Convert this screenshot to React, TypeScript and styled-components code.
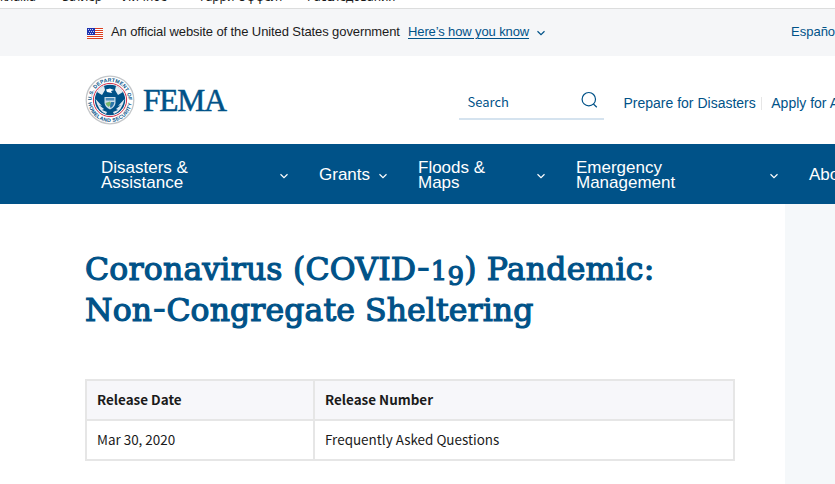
import React from "react";
import styled, { createGlobalStyle } from "styled-components";

const GlobalStyle = createGlobalStyle`
  * {
    box-sizing: border-box;
  }

  body {
    margin: 0;
    background: #fff;
    color: #1b1b1b;
    font-family: "Liberation Sans", Arial, sans-serif;
    overflow: hidden;
  }
`;

const Page = styled.div`
  width: 835px;
  height: 484px;
  display: flex;
  flex-direction: column;
  overflow: hidden;
`;

const BookmarksBar = styled.div`
  height: 9px;
  flex: none;
  display: flex;
  align-items: flex-end;
  border-bottom: 1px solid #dcdddd;
  overflow: hidden;
`;

const Bookmark = styled.span<{ width: number }>`
  width: ${(props) => props.width}px;
  flex: none;
  font-family: "Noto Sans", sans-serif;
  font-size: 12px;
  line-height: 14px;
  margin-bottom: 4px;
  white-space: nowrap;
`;

const Banner = styled.div`
  height: 47px;
  flex: none;
  display: flex;
  align-items: center;
  padding-left: 87px;
  background: #f5f6f8;
  font-size: 13px;
  line-height: 15px;
  white-space: nowrap;
  color: #005288;

  svg {
    margin-top: 1px;
  }
`;

const BannerText = styled.span`
  width: 297px;
  margin: 0 0 2px 8px;
  color: #1b1b1b;
  letter-spacing: -0.1px;
`;

const BannerLink = styled.a`
  text-decoration: underline;
  text-underline-offset: 2px;
  letter-spacing: -0.12px;
  margin: 0 7px 2px 0;
`;

const Language = styled.a`
  margin: 0 0 2px auto;
  width: 44px;
`;

const Header = styled.header`
  height: 88px;
  flex: none;
  display: flex;
  align-items: center;
  padding-left: 85px;
  color: #005288;
  white-space: nowrap;
`;

const Brand = styled.div`
  display: flex;
  align-items: center;
  width: 374px;
  flex: none;
`;

const Wordmark = styled.span`
  margin-left: 8px;
  padding-top: 1px;
  font-family: "Liberation Serif", serif;
  font-size: 31.5px;
  line-height: 36px;
  letter-spacing: -1.2px;
  -webkit-text-stroke: 0.5px #005288;
`;

const Search = styled.div`
  width: 145px;
  height: 34px;
  flex: none;
  display: flex;
  justify-content: space-between;
  margin: 6px 19.5px 0 0;
  padding: 0 6px 0 8.5px;
  border-bottom: 2px solid #d5e3ef;
  font-family: "Noto Sans CJK SC", sans-serif;
  font-size: 13px;
  line-height: 32px;

  svg {
    margin-top: 5px;
  }
`;

const QuickLink = styled.a`
  flex: none;
  padding-top: 6px;
  font-size: 14px;
`;

const Separator = styled.span`
  width: 1px;
  height: 13px;
  flex: none;
  margin: 6px 9.5px 0 5px;
  background: #e6e6e6;
`;

const Nav = styled.nav`
  height: 60px;
  flex: none;
  display: flex;
  align-items: center;
  padding: 1px 0 0 101px;
  background: #005288;
  color: #fff;
`;

const NavItem = styled.div<{ width: number; gap: number }>`
  width: ${(props) => props.width}px;
  margin-right: ${(props) => props.gap}px;
  flex: none;
  display: flex;
  align-items: center;
  justify-content: space-between;
  font-size: 17px;
  line-height: 15px;
  white-space: pre-line;

  svg {
    margin-top: 3px;
  }
`;

const Content = styled.div`
  flex: 1;
  display: flex;
`;

const Main = styled.main`
  width: 785px;
  padding: 45px 50px 0 85px;
`;

const Sidebar = styled.aside`
  flex: 1;
  background: #f5f8fa;
`;

const Title = styled.h1`
  margin: 0;
  color: #005288;
  font-family: "DejaVu Serif", serif;
  font-size: 31.5px;
  font-weight: 400;
  line-height: 41px;
  white-space: nowrap;
  -webkit-text-stroke: 1.2px #005288;
`;

const TitleLine = styled.span<{ spacing: number }>`
  display: block;
  height: 41px;
  letter-spacing: ${(props) => props.spacing}px;
`;

// Old-style figures: x-height digits, optionally dropped below the baseline
const Figure = styled.span<{ drop: number }>`
  font-size: 26px;
  line-height: 0;
  vertical-align: -${(props) => props.drop}px;
`;

const Hyphen = styled.span`
  font-size: 42px;
  line-height: 0;
  vertical-align: -1px;
  -webkit-text-stroke: 0;
`;

const Table = styled.table`
  width: 650px;
  margin-top: 48px;
  border-collapse: collapse;
  table-layout: fixed;
  font-family: "Noto Sans CJK SC", sans-serif;
  font-size: 13.44px;
`;

const Cell = styled.td`
  height: 40px;
  padding: 0 10px 2px;
  border: 2px solid #e6e6e6;
  text-align: left;
  line-height: 20px;
`;

const HeadCell = styled(Cell)`
  background: #f7f7fa;
  font-weight: 700;

  &:first-child {
    width: 228px;
  }
`;

const bookmarks = [
  { label: "клама", width: 62 },
  { label: "Батлер", width: 61 },
  { label: "Личное", width: 77 },
  { label: "Гарри Оффелт", width: 107 },
  { label: "Расследования", width: 100 },
];

const navItems = [
  { label: "Disasters &\nAssistance", width: 188, gap: 30 },
  { label: "Grants", width: 69, gap: 30 },
  { label: "Floods &\nMaps", width: 128, gap: 30 },
  { label: "Emergency\nManagement", width: 203, gap: 30 },
];

const Chevron = () => (
  <svg width="10" height="8" viewBox="0 0 10 8" fill="none" stroke="currentColor" strokeWidth="1.2">
    <path d="M1.5 2.3 L5 5.6 L8.5 2.3" />
  </svg>
);

const Flag = () => (
  <svg width="16" height="11" viewBox="0 0 16 11" shapeRendering="crispEdges">
    <rect width="16" height="11" fill="#fff" />
    {[0, 2, 4, 6, 8, 10].map((y) => (
      <rect key={y} y={y} width="16" height="1" fill="#db3e1f" />
    ))}
    <rect width="8" height="7" fill="#1e33b1" />
    {[1, 3, 5].map((y) =>
      [1, 3, 5].map((x) => (
        <rect key={`${x}-${y}`} x={x + (y === 3 ? 1 : 0)} y={y} width="1" height="1" fill="#c8d0f0" />
      ))
    )}
  </svg>
);

const Seal = () => (
  <svg width="50" height="50" viewBox="0 0 50 50">
    <defs>
      <path id="sealTop" d="M6.8 27 A18.3 18.3 0 1 1 43.2 27" />
      <path id="sealBottom" d="M3 25 A22 22 0 0 0 47 25" />
    </defs>
    <circle cx="25" cy="25" r="23.8" fill="#fff" stroke="#c3c6c9" strokeWidth="1.3" />
    <circle cx="25" cy="25" r="16.6" fill="#fff" stroke="#d0304a" strokeWidth="1" />
    <circle cx="25" cy="25" r="15.2" fill="#005288" />
    <g fill="#005288" fontFamily="Liberation Sans" fontSize="5.2" fontWeight="700" textAnchor="middle">
      <text letterSpacing="0.1">
        <textPath href="#sealTop" startOffset="50%">
          U.S. DEPARTMENT OF
        </textPath>
      </text>
      <text letterSpacing="0.3">
        <textPath href="#sealBottom" startOffset="50%">
          HOMELAND SECURITY
        </textPath>
      </text>
    </g>
    {/* light field either side of the eagle's head and under the wings */}
    <path d="M12 17 Q15 12 19 11 L20 15 L17 20Z" fill="#e3ecf3" />
    <path d="M38 17 Q35 12 31 11 L30 15 L33 20Z" fill="#e3ecf3" />
    <path d="M10.5 24 L17 31 L14 30 L19 34 L17 35 L22 37 L21 39 Q13 36 10.5 24Z" fill="#dfe9f1" />
    <path d="M39.5 24 L33 31 L36 30 L31 34 L33 35 L28 37 L29 39 Q37 36 39.5 24Z" fill="#dfe9f1" />
    <path d="M21 14.5 L25 13.6 L29 15 L26 16 L27 18 L22 17Z" fill="#fff" />
    <path d="M19.5 22 H30.5 V28 Q30 32 25 34.5 Q20 32 19.5 28Z" fill="#c9dce9" />
    <path d="M20.7 23 H29.3 V25.5 H20.7Z" fill="#4c8db9" />
    <path d="M20.5 28 L25 26.5 L26.5 29 L23.5 32 Q21 30.5 20.5 28Z" fill="#7ab86d" />
    <path d="M26 27 H29.3 Q29 31 25.5 33 L25 31Z" fill="#2b75a8" />
  </svg>
);

const SearchIcon = () => (
  <svg width="18" height="18" viewBox="0 0 18 18" fill="none" stroke="currentColor" strokeWidth="1.2">
    <circle cx="8.8" cy="8.2" r="6.7" />
    <path d="M13.4 13 L16.8 16.2" />
  </svg>
);

const App: React.FC = () => {
  return (
    <Page>
      <GlobalStyle />
      <BookmarksBar>
        {bookmarks.map((item) => (
          <Bookmark key={item.label} width={item.width}>
            {item.label}
          </Bookmark>
        ))}
      </BookmarksBar>
      <Banner>
        <Flag />
        <BannerText>An official website of the United States government</BannerText>
        <BannerLink>Here’s how you know</BannerLink>
        <Chevron />
        <Language>Español</Language>
      </Banner>
      <Header>
        <Brand>
          <Seal />
          <Wordmark>FEMA</Wordmark>
        </Brand>
        <Search>
          Search
          <SearchIcon />
        </Search>
        <QuickLink>Prepare for Disasters</QuickLink>
        <Separator />
        <QuickLink>Apply for Assistance</QuickLink>
      </Header>
      <Nav>
        {navItems.map((item) => (
          <NavItem key={item.label} width={item.width} gap={item.gap}>
            {item.label}
            <Chevron />
          </NavItem>
        ))}
        <NavItem width={60} gap={0}>
          About
        </NavItem>
      </Nav>
      <Content>
        <Main>
          <Title>
            <TitleLine spacing={0.2}>
              Coronavirus (COVID<Hyphen>-</Hyphen>
              <Figure drop={0}>1</Figure>
              <Figure drop={5}>9</Figure>) Pandemic:
            </TitleLine>
            <TitleLine spacing={0.1}>
              Non<Hyphen>-</Hyphen>Congregate Sheltering
            </TitleLine>
          </Title>
          <Table>
            <thead>
              <tr>
                <HeadCell as="th">Release Date</HeadCell>
                <HeadCell as="th">Release Number</HeadCell>
              </tr>
            </thead>
            <tbody>
              <tr>
                <Cell>Mar 30, 2020</Cell>
                <Cell>Frequently Asked Questions</Cell>
              </tr>
            </tbody>
          </Table>
        </Main>
        <Sidebar />
      </Content>
    </Page>
  );
};

export default App;
